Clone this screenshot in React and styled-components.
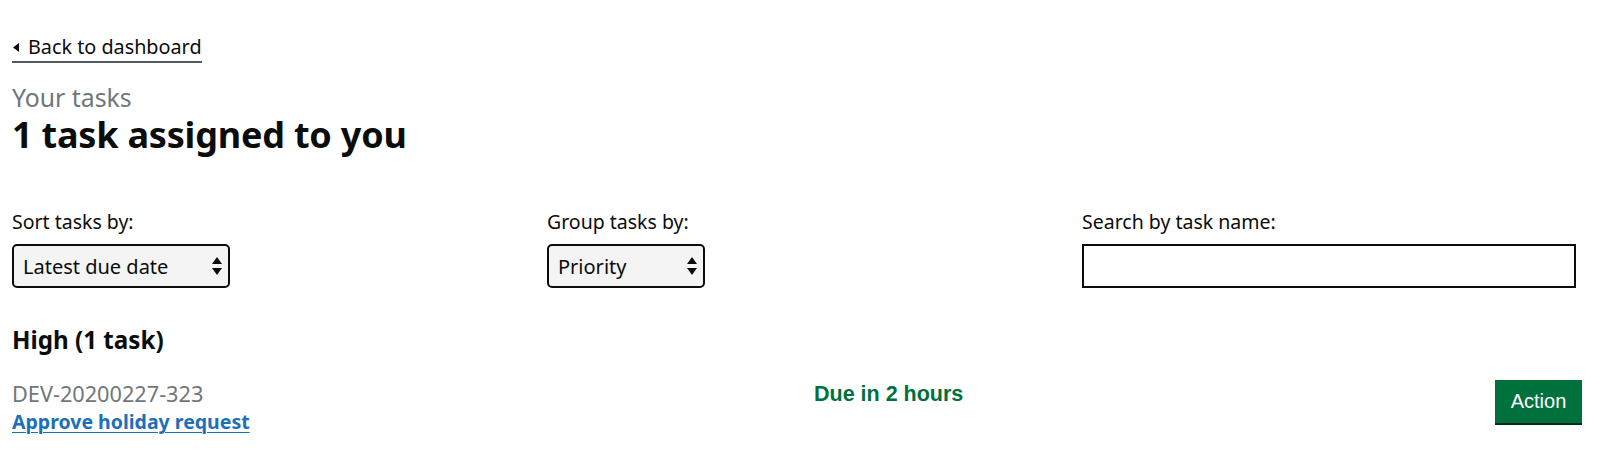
import React from "react";
import styled, { createGlobalStyle } from "styled-components";

const GlobalStyle = createGlobalStyle`
  html, body {
    margin: 0;
    padding: 0;
    background: #ffffff;
  }
  body {
    font-family: "Noto Sans", "Liberation Sans", Arial, sans-serif;
    color: #0b0c0c;
  }
`;

const Page = styled.main`
  width: 1600px;
  padding: 34px 18px 0 12px;
  box-sizing: border-box;
`;

const BackLink = styled.a`
  display: inline-flex;
  align-items: center;
  gap: 9px;
  font-size: 19.8px;
  line-height: 26px;
  color: #0b0c0c;
  text-decoration: none;
  border-bottom: 2px solid #505a5f;
  padding-bottom: 1px;
  svg {
    width: 6px;
    height: 9px;
    margin-left: 1px;
  }
`;

const Caption = styled.span`
  display: block;
  margin-top: 20px;
  font-size: 24.8px;
  line-height: 28px;
  color: #6f777b;
`;

const Heading = styled.h1`
  margin: 4px 0 0;
  font-size: 36px;
  line-height: 40px;
  font-weight: 700;
  letter-spacing: -0.2px;
`;

const Filters = styled.div`
  display: grid;
  grid-template-columns: 535px 535px 494px;
  margin-top: 55px;
`;

const Field = styled.div`
  display: flex;
  flex-direction: column;
  gap: 10px;
`;

const Label = styled.label`
  font-size: 19.5px;
  line-height: 24px;
`;

const SelectWrap = styled.div`
  position: relative;
  width: ${(p) => p.$width}px;
`;

const Select = styled.select`
  appearance: none;
  width: 100%;
  height: 44px;
  box-sizing: border-box;
  padding: 0 30px 0 9px;
  border: 2px solid #0b0c0c;
  border-radius: 5px;
  background: #f4f4f4;
  font-family: "Noto Sans", "Liberation Sans", Arial, sans-serif;
  font-size: 20px;
  color: #0b0c0c;
`;

const Arrows = styled.svg`
  position: absolute;
  right: 8px;
  top: 13px;
  width: 10px;
  height: 18px;
  pointer-events: none;
`;

const SearchInput = styled.input`
  width: 100%;
  height: 44px;
  box-sizing: border-box;
  border: 2px solid #0b0c0c;
  border-radius: 0;
  padding: 0 8px;
  font-size: 19px;
  background: #ffffff;
`;

const GroupTitle = styled.h2`
  margin: 36px 0 0;
  font-size: 24.2px;
  line-height: 32px;
  font-weight: 700;
`;

const TaskRow = styled.div`
  display: grid;
  grid-template-columns: 802px 1fr auto;
  align-items: start;
  margin-top: 24px;
`;

const TaskInfo = styled.div`
  display: flex;
  flex-direction: column;
`;

const TaskId = styled.span`
  font-size: 21.7px;
  line-height: 28px;
  color: #6f777b;
`;

const TaskLink = styled.a`
  font-size: 19.5px;
  line-height: 28px;
  font-weight: 700;
  color: #1d70b8;
  text-decoration: underline;
  text-underline-offset: 3px;
  text-decoration-thickness: 1px;
`;

const Due = styled.strong`
  font-family: "Liberation Sans", Arial, sans-serif;
  font-size: 21.5px;
  line-height: 28px;
  font-weight: 700;
  color: #00703c;
`;

const ActionButton = styled.button`
  margin-top: 0;
  width: 87px;
  height: 43px;
  border: 0;
  border-radius: 0;
  background: #00703c;
  box-shadow: 0 2px 0 #002d18;
  color: #ffffff;
  font-family: "Liberation Sans", Arial, sans-serif;
  font-size: 20px;
  padding: 0;
`;

const ArrowIcon = () => (
  <Arrows viewBox="0 0 10 18">
    <path d="M5 0 L10 7 L0 7 Z" fill="#0b0c0c" />
    <path d="M5 18 L10 11 L0 11 Z" fill="#0b0c0c" />
  </Arrows>
);

const Dropdown = ({ id, width, options }) => (
  <SelectWrap $width={width}>
    <Select id={id} defaultValue={options[0]}>
      {options.map((o) => (
        <option key={o}>{o}</option>
      ))}
    </Select>
    <ArrowIcon />
  </SelectWrap>
);

export default function App() {
  return (
    <>
      <GlobalStyle />
      <Page>
        <BackLink href="#">
          <svg viewBox="0 0 6 9">
            <path d="M6 0 L6 9 L0 4.5 Z" fill="#0b0c0c" />
          </svg>
          Back to dashboard
        </BackLink>
        <Caption>Your tasks</Caption>
        <Heading>1 task assigned to you</Heading>

        <Filters>
          <Field>
            <Label htmlFor="sort">Sort tasks by:</Label>
            <Dropdown id="sort" width={218} options={["Latest due date", "Earliest due date"]} />
          </Field>
          <Field>
            <Label htmlFor="group">Group tasks by:</Label>
            <Dropdown id="group" width={158} options={["Priority", "Status"]} />
          </Field>
          <Field>
            <Label htmlFor="search">Search by task name:</Label>
            <SearchInput id="search" type="text" />
          </Field>
        </Filters>

        <GroupTitle>High (1 task)</GroupTitle>
        <TaskRow>
          <TaskInfo>
            <TaskId>DEV-20200227-323</TaskId>
            <TaskLink href="#">Approve holiday request</TaskLink>
          </TaskInfo>
          <Due>Due in 2 hours</Due>
          <ActionButton>Action</ActionButton>
        </TaskRow>
      </Page>
    </>
  );
}
